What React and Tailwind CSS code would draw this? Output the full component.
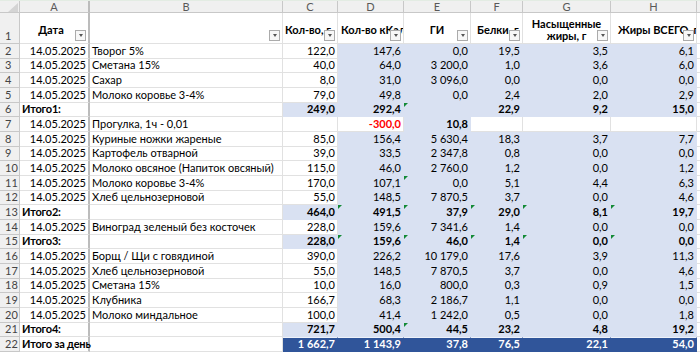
const W = {
  rn: 'w-[20px]',
  A: 'w-[70px]',
  B: 'w-[193px]',
  C: 'w-[55px]',
  D: 'w-[66px]',
  E: 'w-[67px]',
  F: 'w-[52px]',
  G: 'w-[88px]',
  H: 'w-[86px]',
};
const NUM_COLS = ['C', 'D', 'E', 'F', 'G', 'H'];

const rows = [
  { n: 2, t: 'item', a: '14.05.2025', b: 'Творог 5%', v: ['122,0', '147,6', '0,0', '19,5', '3,5', '6,1'] },
  { n: 3, t: 'item', a: '14.05.2025', b: 'Сметана 15%', v: ['40,0', '64,0', '3 200,0', '1,0', '3,6', '6,0'] },
  { n: 4, t: 'item', a: '14.05.2025', b: 'Сахар', v: ['8,0', '31,0', '3 096,0', '0,0', '0,0', '0,0'] },
  { n: 5, t: 'item', a: '14.05.2025', b: 'Молоко коровье 3-4%', v: ['79,0', '49,8', '0,0', '2,4', '2,0', '2,9'] },
  { n: 6, t: 'total', a: 'Итого1:', b: '', v: ['249,0', '292,4', '', '22,9', '9,2', '15,0'], flags: ['E'] },
  { n: 7, t: 'walk', a: '14.05.2025', b: 'Прогулка, 1ч - 0,01', v: ['', '-300,0', '10,8', '', '', ''] },
  { n: 8, t: 'item', a: '14.05.2025', b: 'Куриные ножки жареные', v: ['85,0', '156,4', '5 630,4', '18,3', '3,7', '7,7'] },
  { n: 9, t: 'item', a: '14.05.2025', b: 'Картофель отварной', v: ['39,0', '33,5', '2 347,8', '0,8', '0,0', '0,0'] },
  { n: 10, t: 'item', a: '14.05.2025', b: 'Молоко овсяное (Напиток овсяный)', v: ['115,0', '46,0', '2 760,0', '1,2', '0,0', '1,2'] },
  { n: 11, t: 'item', a: '14.05.2025', b: 'Молоко коровье 3-4%', v: ['170,0', '107,1', '0,0', '5,1', '4,4', '6,3'], flags: ['E'] },
  { n: 12, t: 'item', a: '14.05.2025', b: 'Хлеб цельнозерновой', v: ['55,0', '148,5', '7 870,5', '3,7', '0,0', '4,6'] },
  { n: 13, t: 'total', a: 'Итого2:', b: '', v: ['464,0', '491,5', '37,9', '29,0', '8,1', '19,7'], flags: ['D', 'E', 'F', 'G', 'H'] },
  { n: 14, t: 'item', a: '14.05.2025', b: 'Виноград зеленый без косточек', v: ['228,0', '159,6', '7 341,6', '1,4', '0,0', '0,0'] },
  { n: 15, t: 'total', a: 'Итого3:', b: '', v: ['228,0', '159,6', '46,0', '1,4', '0,0', '0,0'], flags: ['D', 'E', 'F', 'G', 'H'] },
  { n: 16, t: 'item', a: '14.05.2025', b: 'Борщ / Щи с говядиной', v: ['390,0', '226,2', '10 179,0', '17,6', '3,9', '11,3'] },
  { n: 17, t: 'item', a: '14.05.2025', b: 'Хлеб цельнозерновой', v: ['55,0', '148,5', '7 870,5', '3,7', '0,0', '4,6'] },
  { n: 18, t: 'item', a: '14.05.2025', b: 'Сметана 15%', v: ['10,0', '16,0', '800,0', '0,3', '0,9', '1,5'] },
  { n: 19, t: 'item', a: '14.05.2025', b: 'Клубника', v: ['166,7', '68,3', '2 186,7', '1,1', '0,0', '0,0'] },
  { n: 20, t: 'item', a: '14.05.2025', b: 'Молоко миндальное', v: ['100,0', '41,4', '1 242,0', '0,5', '0,0', '1,8'] },
  { n: 21, t: 'total', a: 'Итого4:', b: '', v: ['721,7', '500,4', '44,5', '23,2', '4,8', '19,2'], flags: ['E'] },
  { n: 22, t: 'day', a: 'Итого за день', b: '', v: ['1 662,7', '1 143,9', '37,8', '76,5', '22,1', '54,0'] },
];

// which fill each of C..H gets
function fillFor(t, i) {
  if (t === 'item') return i === 0 ? 'white' : 'blue';
  if (t === 'total') return 'blue';
  if (t === 'day') return 'dark';
  return i === 2 ? 'blue' : 'white'; // walk row
}

const fillCls = {
  white: 'bg-white border-[#e1e1e1] text-black',
  blue: 'bg-[#d9e1f2] border-[#d9e1f2] text-black',
  dark: 'bg-[#30559a] border-[#30559a] border-t border-t-[#eef2fa] text-white font-bold',
};

function Flag() {
  return <span className="absolute left-0 top-0 h-0 w-0 border-r-[4px] border-t-[4px] border-r-transparent border-t-[#138a36]" />;
}

function FilterBtn() {
  return (
    <span className="absolute bottom-[2px] right-[2px] z-10 flex h-[11px] w-[11px] items-center justify-center border border-[#ababab] bg-[#f7f7f7]">
      <span className="h-0 w-0 border-x-[2.5px] border-t-[3px] border-x-transparent border-t-[#555]" />
    </span>
  );
}

function ColHeads() {
  return (
    <div className="flex h-[13px] border-t border-[#e3ece3] bg-[#f0f0f0] text-[11px] leading-[12px] text-[#595959]">
      <div className={`${W.rn} relative shrink-0 border-b border-r border-[#c8c8c8]`}>
        <svg className="absolute left-0 top-0" width="20" height="12" viewBox="0 0 20 12">
          <polygon points="18,2 18,11 8,11" fill="#d4d4d4" />
        </svg>
      </div>
      <div className={`${W.A} shrink-0 border-b border-r-2 border-[#c8c8c8] border-r-[#bcbcbc] text-center`}>A</div>
      {['B', ...NUM_COLS].map((c) => (
        <div key={c} className={`${W[c]} shrink-0 border-b border-r border-[#c8c8c8] text-center`}>{c}</div>
      ))}
      <div className="flex-1 border-b border-[#c8c8c8]" />
    </div>
  );
}

function HeaderRow() {
  const cell = 'relative flex shrink-0 items-center justify-center overflow-hidden whitespace-nowrap border-b border-r border-[#e1e1e1] bg-white pt-[4px] font-bold';
  return (
    <div className="flex h-[31px] text-[11px] leading-[12px] text-black">
      <div className={`${W.rn} flex shrink-0 items-end border-b border-r border-[#c8c8c8] bg-[#f0f0f0] pb-[1px] pl-[5px] text-[#444]`}>1</div>
      <div className={`${cell} ${W.A} border-r-2 border-r-[#bcbcbc]`}>
        <span className="pr-[6px]">Дата</span>
        <FilterBtn />
      </div>
      <div className={`${cell} ${W.B}`}>
        <FilterBtn />
      </div>
      <div className={`${cell} ${W.C} justify-start pl-[2px]`}>
        Кол-во, г
        <FilterBtn />
      </div>
      <div className={`${cell} ${W.D} justify-start pl-[3px]`}>
        Кол-во кКал
        <FilterBtn />
      </div>
      <div className={`${cell} ${W.E}`}>
        ГИ
        <FilterBtn />
      </div>
      <div className={`${cell} ${W.F} justify-start pl-[6px]`}>
        Белки, г
        <FilterBtn />
      </div>
      <div className={`${cell} ${W.G} flex-col !whitespace-normal text-center leading-[12px]`}>
        <span>Насыщенные</span>
        <span>жиры, г</span>
        <FilterBtn />
      </div>
      <div className={`${cell} ${W.H} justify-start pl-[7px]`}>
        Жиры ВСЕГО, г
        <FilterBtn />
      </div>
      <div className="flex-1 border-b border-[#e1e1e1] bg-white" />
    </div>
  );
}

function DataRow({ row, idx }) {
  const top = (i) => Math.round(44 + (i * 44) / 3);
  const h = top(idx + 1) - top(idx) === 15 ? 'h-[15px]' : 'h-[14px]';
  const isTotal = row.t === 'total' || row.t === 'day';
  const base = 'relative flex shrink-0 items-end whitespace-nowrap border-b border-r pb-[1px]';

  return (
    <div className={`flex ${h} text-[11px] leading-[12px]`}>
      <div className={`${W.rn} flex shrink-0 items-end border-b border-r border-[#c8c8c8] bg-[#f0f0f0] pb-[1px] pl-[5px] text-[#444]`}>{row.n}</div>
      <div className={`${base} ${W.A} border-[#e1e1e1] border-r-2 border-r-[#bcbcbc] bg-white text-black ${isTotal ? 'z-10 overflow-visible pl-[2px] font-bold tracking-[-0.2px]' : 'justify-end overflow-hidden pr-[2px]'}`}>
        {row.a}
      </div>
      <div className={`${base} ${W.B} overflow-hidden border-[#e1e1e1] bg-white pl-[2px] text-black`}>{row.b}</div>
      {NUM_COLS.map((c, i) => {
        const fill = fillFor(row.t, i);
        let extra = '';
        if (row.t === 'total') extra = 'font-bold';
        if (row.t === 'walk' && c === 'D') extra = 'font-bold !text-[#ff0000]';
        if (row.t === 'walk' && c === 'E') extra = 'font-bold';
        return (
          <div key={c} className={`${base} ${W[c]} ${fillCls[fill]} justify-end overflow-hidden pr-[2px] ${extra}`}>
            {row.flags && row.flags.includes(c) && <Flag />}
            {row.v[i].replace(' ', '\u00a0')}
          </div>
        );
      })}
      <div className="flex-1 border-b border-[#e1e1e1] bg-white" />
    </div>
  );
}

export default function App() {
  return (
    <div className="h-[354px] w-[700px] overflow-hidden bg-white font-['Lato',sans-serif]">
      <ColHeads />
      <HeaderRow />
      {rows.map((row, idx) => (
        <DataRow key={row.n} row={row} idx={idx} />
      ))}
    </div>
  );
}
